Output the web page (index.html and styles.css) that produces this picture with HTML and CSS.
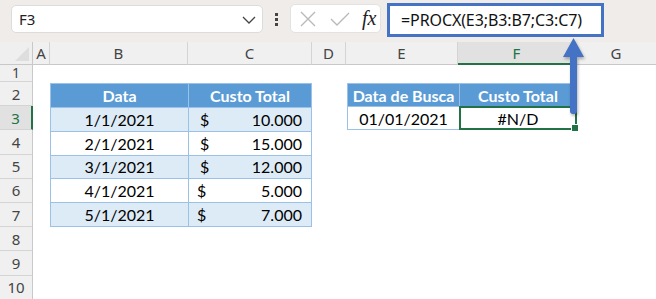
FILE: index.html
```html
<html>
	<head>
		<title>PROCX</title>
		<meta name="viewport" content="width=device-width, initial-scale=1.0">
		<link rel="stylesheet" href="styles.css">
	</head>
	<body>
		<div class="page">
			<div class="toolbar">
				<div class="namebox">
					<span>F3</span>
					<svg class="chev" width="14" height="8" viewBox="0 0 14 8"><path d="M1 1 L7 7 L13 1" fill="none" stroke="#444" stroke-width="1.3"/></svg>
				</div>
				<div class="dots"><i></i><i></i><i></i></div>
				<div class="fbtns">
					<svg width="18" height="18" viewBox="0 0 18 18"><path d="M2 2 L16 16 M16 2 L2 16" stroke="#b9b9b9" stroke-width="1.4" fill="none"/></svg>
					<svg width="20" height="16" viewBox="0 0 20 16"><path d="M1 8 L7 14 L19 2" stroke="#b9b9b9" stroke-width="1.4" fill="none"/></svg>
					<span class="fx">fx</span>
				</div>
				<div class="formula">=PROCX(E3;B3:B7;C3:C7)</div>
			</div>

			<div class="sheet">
				<div class="corner"></div>
				<div class="colhead">A</div>
				<div class="colhead">B</div>
				<div class="colhead">C</div>
				<div class="colhead">D</div>
				<div class="colhead">E</div>
				<div class="colhead active">F</div>
				<div class="colhead last">G</div>

				<div class="rowhead r1">1</div>
				<div class="rowhead">2</div>
				<div class="rowhead active">3</div>
				<div class="rowhead">4</div>
				<div class="rowhead">5</div>
				<div class="rowhead">6</div>
				<div class="rowhead">7</div>
				<div class="rowhead">8</div>
				<div class="rowhead">9</div>
				<div class="rowhead">10</div>

				<div class="tbl data">
					<div class="th">Data</div>
					<div class="th">Custo Total</div>
					<div class="td">1/1/2021</div>
					<div class="td money"><span>$</span><span>10.000</span></div>
					<div class="td alt">2/1/2021</div>
					<div class="td alt money"><span>$</span><span>15.000</span></div>
					<div class="td">3/1/2021</div>
					<div class="td money"><span>$</span><span>12.000</span></div>
					<div class="td alt">4/1/2021</div>
					<div class="td alt money short"><span>$</span><span>5.000</span></div>
					<div class="td">5/1/2021</div>
					<div class="td money short"><span>$</span><span>7.000</span></div>
				</div>

				<div class="tbl lookup">
					<div class="th">Data de Busca</div>
					<div class="th">Custo Total</div>
					<div class="td alt">01/01/2021</div>
					<div class="td alt selected">#N/D<b class="handle"></b></div>
				</div>
			</div>

			<svg class="arrow" width="30" height="84" viewBox="0 0 30 84">
				<path d="M13.5 2 L24 21 L17 21 L17 75 Q17 78 14 78 L13 78 Q10 78 10 75 L10 21 L3 21 Z" fill="#4472c4"/>
			</svg>
		</div>
	</body>
</html>
```

FILE: styles.css
```css
body {
	margin: 0;
	background: #ffffff;
	font-family: "Lato", "Liberation Sans", sans-serif;
}
.page {
	position: relative;
	width: 656px;
	height: 299px;
	overflow: hidden;
}

/* formula bar */
.toolbar {
	height: 42px;
	background: #f0ecea;
	display: flex;
	align-items: flex-start;
	box-sizing: border-box;
	padding-left: 11px;
}
.namebox {
	margin-top: 5px;
	width: 252px;
	height: 28px;
	box-sizing: border-box;
	background: #fff;
	border: 1px solid #dcdcdc;
	border-radius: 5px;
	display: flex;
	align-items: center;
	justify-content: space-between;
	padding: 0 6px 0 7px;
	font-family: "Noto Sans", sans-serif;
	font-size: 15px;
	color: #222;
}
.chev {
	margin-top: 2px;
}
.dots {
	width: 27px;
	height: 38px;
	display: flex;
	flex-direction: column;
	align-items: center;
	justify-content: center;
	gap: 2px;
}
.dots i {
	width: 3px;
	height: 3px;
	background: #444;
	display: block;
}
.fbtns {
	margin-top: 4px;
	width: 91px;
	height: 29px;
	box-sizing: border-box;
	background: #fff;
	border: 1px solid #e2e2e2;
	border-radius: 5px;
	display: flex;
	align-items: center;
	padding-left: 8px;
	gap: 13px;
}
.fx {
	font-family: "Liberation Serif", serif;
	font-style: italic;
	font-size: 20px;
	color: #222;
	margin-left: -1px;
}
.formula {
	margin: 3px 0 0 6px;
	width: 217px;
	height: 34px;
	box-sizing: border-box;
	background: #fff;
	border: 3px solid #4472c4;
	padding-left: 11px;
	line-height: 28px;
	font-family: "Noto Sans", sans-serif;
	font-size: 16px;
	letter-spacing: -0.1px;
	color: #111;
	white-space: nowrap;
}

/* sheet */
.sheet {
	display: grid;
	grid-template-columns: 33px 17px 138px 124px 34px 112px 118px 80px;
	grid-template-rows: 23px 17px repeat(9, 24.2px);
}
.corner {
	background: #efefef;
	border-right: 1px solid #c8c8c8;
	border-bottom: 1px solid #c8c8c8;
	position: relative;
}
.corner:after {
	content: "";
	position: absolute;
	right: 3px;
	bottom: 3px;
	border-left: 14px solid transparent;
	border-bottom: 14px solid #dedede;
}
.colhead {
	background: #f0f0f0;
	border-right: 1px solid #d4d4d4;
	border-bottom: 1px solid #c8c8c8;
	font-family: "Noto Sans", sans-serif;
	font-size: 15px;
	color: #444;
	display: flex;
	align-items: center;
	justify-content: center;
}
.colhead.last {
	border-right: none;
}
.colhead.active {
	background: #e1e1e1;
	border-bottom: 2px solid #217346;
	color: #217346;
}
.rowhead {
	grid-column: 1;
	background: #f0f0f0;
	border-right: 1px solid #c8c8c8;
	border-bottom: 1px solid #d4d4d4;
	font-family: "Noto Sans", sans-serif;
	font-size: 15px;
	line-height: 16px;
	color: #444;
	display: flex;
	align-items: center;
	justify-content: center;
}
.rowhead.r1 {
	font-size: 14px;
	line-height: 16px;
}
.rowhead.active {
	background: #e1e1e1;
	border-right: 2px solid #217346;
	color: #217346;
}

/* tables */
.tbl {
	display: grid;
	grid-template-columns: 1fr 1fr;
	border-top: 1px solid #9bc2e6;
	border-left: 1px solid #9bc2e6;
	font-size: 16px;
	color: #000;
}
.data {
	grid-column: 3 / 5;
	grid-row: 3 / 9;
	grid-template-columns: 138px 123px;
	grid-auto-rows: 1fr;
	margin-top: 1px;
}
.lookup {
	grid-column: 6 / 8;
	grid-row: 3 / 5;
	grid-template-columns: 112px 117px;
	grid-auto-rows: 1fr;
	margin: 1px 0 0 1px;
}
.th {
	background: #5b9bd5;
	color: #fff;
	font-weight: bold;
	display: flex;
	align-items: center;
	justify-content: center;
	border-right: 1px solid #9bc2e6;
	border-bottom: 1px solid #9bc2e6;
}
.td {
	background: #ddebf7;
	display: flex;
	align-items: center;
	justify-content: center;
	border-right: 1px solid #9bc2e6;
	border-bottom: 1px solid #9bc2e6;
}
.td.alt {
	background: #ffffff;
}
.money {
	justify-content: space-between;
	padding: 0 9px 0 11px;
}
.money.short {
	padding-left: 8px;
}
.selected {
	position: relative;
	border: 2px solid #217346;
	margin: -1px 0 0 -1px;
}
.handle {
	position: absolute;
	right: -4px;
	bottom: -4px;
	width: 6px;
	height: 6px;
	background: #217346;
	border: 1px solid #fff;
}

/* callout arrow */
.arrow {
	position: absolute;
	left: 560px;
	top: 36px;
	filter: drop-shadow(1px 2px 1.5px rgba(0, 0, 0, 0.3));
}
```
